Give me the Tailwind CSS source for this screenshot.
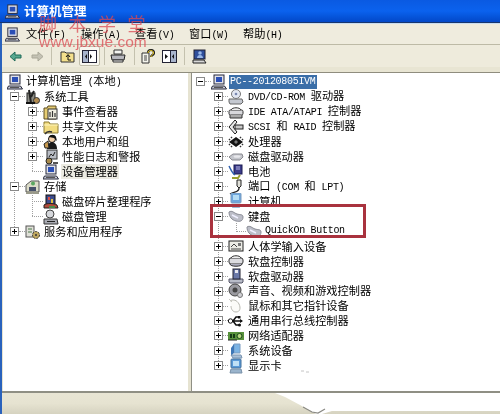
<!doctype html>
<html lang="zh">
<head>
<meta charset="utf-8">
<script src="https://cdn.jsdelivr.net/npm/@tailwindcss/browser@4"></script>
<title>计算机管理</title>
</head>
<body class="bg-white">
<svg class="hidden" width="0" height="0">
<defs>
<symbol id="pc" viewBox="0 0 16 16"><rect x="3" y="1" width="10" height="9" fill="#dfe1ea" stroke="#26283a"/><rect x="5" y="3" width="6" height="5" fill="#2b4fb5"/><path d="M1.500 12h12l2 3H0z" fill="#c9ccd8" stroke="#26283a"/><path d="M3 13.500h9" stroke="#555"/></symbol>
<symbol id="tools" viewBox="0 0 16 16"><rect x="2" y="4" width="8" height="10" fill="#8c8c84" stroke="#222"/><path d="M4 1l2 13M9 2l-3 6" stroke="#222" stroke-width="2"/><circle cx="11.500" cy="11.500" r="3" fill="#b08a50" stroke="#333"/><path d="M1 14h9" stroke="#111" stroke-width="2"/></symbol>
<symbol id="log" viewBox="0 0 16 16"><path d="M1 4h3l1-2h8v13H1z" fill="#e6cc72" stroke="#5a4a20"/><rect x="5" y="5" width="9" height="10" fill="#f2f0e2" stroke="#333"/><path d="M7 8v5M9.500 7v6M12 9v4" stroke="#333" stroke-width="1.200"/></symbol>
<symbol id="folder" viewBox="0 0 16 16"><path d="M1 3h5l1 2h8v9H1z" fill="#f2dc80" stroke="#8c7a30"/><path d="M1 6h14" stroke="#fff6c0"/><path d="M2 15c2-3 4-3 7-2" stroke="#333" stroke-width="1.500" fill="none"/></symbol>
<symbol id="users" viewBox="0 0 16 16"><circle cx="9" cy="5" r="3.500" fill="#f2cfa8" stroke="#111"/><path d="M6 3c1-3 6-3 7 0l1 4-3-3z" fill="#111"/><path d="M4 15c0-5 3-7 5-7s5 2 5 7z" fill="#1a1a1a"/><path d="M1 10l4-3 1 7H2z" fill="#c89a50" stroke="#222"/></symbol>
<symbol id="perf" viewBox="0 0 16 16"><rect x="4" y="1" width="10" height="9" fill="#b8bcc4" stroke="#333"/><path d="M6 8l2-3 2 2 2-4" stroke="#222" fill="none"/><circle cx="6" cy="12" r="3" fill="#a88a4c" stroke="#222"/><path d="M10 14h5" stroke="#555" stroke-width="2"/></symbol>
<symbol id="storage" viewBox="0 0 16 16"><path d="M1 6l5-4h8v11H1z" fill="#dcdcc8" stroke="#555"/><rect x="4" y="8" width="7" height="4" fill="#46506a"/><circle cx="8" cy="4.500" r="2" fill="#5aa860"/><path d="M1 13h13v2H1z" fill="#9a9a8a"/></symbol>
<symbol id="defrag" viewBox="0 0 16 16"><rect x="3" y="1" width="9" height="10" fill="#3d4a8c" stroke="#111"/><path d="M5 3h2v3H5z" fill="#d8504a"/><path d="M8 5h2v4H8z" fill="#e2c040"/><path d="M1 11c2-2 10-2 13 0l1 3H1z" fill="#b04a3a" stroke="#222"/><path d="M6 13h6" stroke="#4a8a4a" stroke-width="2"/></symbol>
<symbol id="diskm" viewBox="0 0 16 16"><circle cx="7" cy="5" r="4" fill="#d6d8dc" stroke="#444"/><path d="M1 10h13l1 5H1z" fill="#a8aab2" stroke="#333"/><path d="M4 12.500h8" stroke="#222"/></symbol>
<symbol id="svc" viewBox="0 0 16 16"><rect x="1" y="2" width="8" height="11" fill="#e0e0d8" stroke="#555"/><path d="M3 5h4M3 8h4" stroke="#4a7a4a"/><circle cx="11" cy="11" r="3.500" fill="#c0a860" stroke="#333" stroke-dasharray="2 1"/><circle cx="11" cy="11" r="1" fill="#333"/></symbol>
<symbol id="dvd" viewBox="0 0 16 16"><path d="M1 10h13l1 3-2 2H2l-1-2z" fill="#c4c8d0" stroke="#666"/><circle cx="8" cy="5" r="4.500" fill="#e2e6f2" stroke="#777"/><circle cx="8" cy="5" r="1.300" fill="#7a88b0"/></symbol>
<symbol id="ide" viewBox="0 0 16 16"><rect x="1" y="6" width="14" height="5" rx="1.500" fill="#d8d8dc" stroke="#333"/><path d="M3 6c1-3 9-3 10 0" fill="#eee" stroke="#333"/><path d="M2 11v3h12v-3" fill="#aaa" stroke="#333"/></symbol>
<symbol id="scsi" viewBox="0 0 16 16"><path d="M7 1L1 8l6 7 2-2-4-5 4-5z" fill="#e8e8e8" stroke="#222"/><rect x="7" y="6" width="8" height="4" fill="#c8c8c8" stroke="#222"/></symbol>
<symbol id="cpu" viewBox="0 0 16 16"><path d="M8 3l7 5-7 5-7-5z" fill="#141414"/><path d="M1 6l1-1M3 4l1-1M15 6l-1-1M13 4l-1-1M1 10l1 1M3 12l1 1M15 10l-1 1M13 12l-1 1" stroke="#333" stroke-width="1.500"/><path d="M8 6l2 2-2 2-2-2z" fill="#777"/></symbol>
<symbol id="hdd" viewBox="0 0 16 16"><path d="M1 8l4-3h9l1 3-3 3H4z" fill="#c4c6cc" stroke="#8a8a90"/><ellipse cx="9" cy="7.500" rx="3.500" ry="1.300" fill="#e8e8ec"/></symbol>
<symbol id="bat" viewBox="0 0 16 16"><rect x="6" y="1" width="8" height="9" fill="#3c3c8c" stroke="#1a1a50"/><path d="M8 3h4M8 5h4" stroke="#b8b8e0"/><path d="M1 2c2 4 3 7 6 9" stroke="#3060b0" stroke-width="1.500" fill="none"/><path d="M4 14h6l2-3" stroke="#9aa030" stroke-width="2" fill="none"/></symbol>
<symbol id="port" viewBox="0 0 16 16"><path d="M9 1h4v6l-2 2-2-2z" fill="#e0e0d8" stroke="#222"/><path d="M11 9c0 5-5 3-9 6" stroke="#222" stroke-width="1.300" fill="none"/></symbol>
<symbol id="comp" viewBox="0 0 16 16"><rect x="3" y="0" width="10" height="10" rx="1" fill="#6ea6dc" stroke="#7a9cc0"/><rect x="5" y="2" width="6" height="5" fill="#b4dcf4"/><path d="M5 11h6l1 4H4z" fill="#9cb8d4"/></symbol>
<symbol id="kb" viewBox="0 0 16 16"><path d="M1 4c3-2 5 1 8 2s6 0 6 3c0 4-3 5-7 4S1 9 1 4z" fill="#bcbec8" stroke="#8a8c96"/><path d="M4 7l6 3" stroke="#eef" stroke-width="1.500"/></symbol>
<symbol id="hid" viewBox="0 0 16 16"><rect x="1" y="3" width="14" height="10" fill="#ecece6" stroke="#222"/><path d="M3 9l3-3 3 3M3 11h10" stroke="#444" fill="none"/><rect x="10" y="5" width="3" height="3" fill="#777"/></symbol>
<symbol id="fdc" viewBox="0 0 16 16"><rect x="1" y="5" width="14" height="6" rx="2" fill="#dcdce0" stroke="#333"/><path d="M3 5c1-3 9-3 10 0" fill="#eee" stroke="#333"/><path d="M2 11c0 3 12 3 12 0" fill="#aab" stroke="#333"/></symbol>
<symbol id="fdd" viewBox="0 0 16 16"><path d="M1 11h14v3l-1 1H2l-1-1z" fill="#b8bcc8" stroke="#556"/><rect x="5" y="1" width="7" height="10" fill="#6a78a8" stroke="#223"/><rect x="7" y="2" width="3" height="3" fill="#e8e8f0"/></symbol>
<symbol id="snd" viewBox="0 0 16 16"><circle cx="7" cy="7" r="6" fill="#9a9aa0" stroke="#444"/><circle cx="7" cy="7" r="2.500" fill="#444"/><circle cx="12" cy="12" r="2.500" fill="#d0d0d4" stroke="#777"/></symbol>
<symbol id="mouse" viewBox="0 0 16 16"><path d="M2 3c3-2 7-1 9 3s1 8-3 8-5-4-5-6" fill="#fbfbf8" stroke="#b8b8b0"/><path d="M1 1l3 3" stroke="#c8c8c0"/></symbol>
<symbol id="usb" viewBox="0 0 16 16"><path d="M2 8h12M5 8l3-4h3M5 8l3 4h3" stroke="#111" stroke-width="1.500" fill="none"/><circle cx="2.500" cy="8" r="2.200" fill="#fff" stroke="#111"/><path d="M12 6l3 2-3 2z" fill="#111"/><rect x="10" y="3" width="2.500" height="2.500" fill="#111"/><circle cx="11.500" cy="12" r="1.500" fill="#111"/></symbol>
<symbol id="net" viewBox="0 0 16 16"><rect x="0" y="4" width="16" height="8" fill="#58923c"/><path d="M2 6h2v4H2zM5 6h2v4H5z" fill="#143a14"/><circle cx="11.500" cy="8" r="2.500" fill="#b8d880" stroke="#1a4a1a"/><path d="M0 12h9" stroke="#222"/></symbol>
<symbol id="sys" viewBox="0 0 16 16"><path d="M6 1h6v9H6z" fill="#7cb4e4" stroke="#7a9cc0"/><path d="M3 5l3-4v9l-3 3z" fill="#3e78b8"/><path d="M3 12h10l1 3H5z" fill="#a8c0d8" stroke="#7a94b0"/></symbol>
<symbol id="disp" viewBox="0 0 16 16"><rect x="3" y="1" width="10" height="9" rx="1" fill="#5a9ad8" stroke="#43709c"/><path d="M5 3h6v5H5z" fill="#bfe0f6"/><path d="M3 11h10l1 4H2z" fill="#9ab4cc" stroke="#7890a8"/></symbol>
<symbol id="plus" viewBox="0 0 9 9"><rect x=".5" y=".5" width="8" height="8" fill="#fff" stroke="#8a8a8a"/><path d="M2 4.500h5M4.500 2v5" stroke="#000"/></symbol>
<symbol id="minus" viewBox="0 0 9 9"><rect x=".5" y=".5" width="8" height="8" fill="#fff" stroke="#8a8a8a"/><path d="M2 4.500h5" stroke="#000"/></symbol>
</defs>
</svg>

<div class="relative w-[500px] h-[414px] overflow-hidden flex flex-col blur-[0.35px] bg-[#e6e3d1] font-['Noto_Sans_CJK_SC',sans-serif] text-black [&_span]:font-['Liberation_Mono',monospace] [&_span]:text-[10px] [&_span]:tracking-[-0.3px]">

  <!-- title bar -->
  <header class="h-[23px] shrink-0 flex items-center gap-[4px] pl-[5px] bg-gradient-to-b from-[#0a5ae2] via-[#0b62ee] to-[#0348c8] border-b border-[#18366e]">
    <svg class="w-[15px] h-[15px]"><use href="#pc"/></svg>
    <h1 class="text-[12.500px] font-bold text-white leading-none">计算机管理</h1>
  </header>

  <div class="flex-1 min-h-0 flex flex-col border-l-[2px] border-[#2a62bc]">
    <!-- menu -->
    <nav class="h-[21px] shrink-0 flex items-center pl-[3px] bg-[#efecde] border-t border-[#c8dcf0] border-b-[#a8a694] text-[11.200px] [&_span]:text-[9.500px]">
      <svg class="w-[15px] h-[15px] mr-[6px]"><use href="#pc"/></svg>
      <a class="w-[55px] whitespace-nowrap">文件<span>(F)</span></a>
      <a class="w-[54px] whitespace-nowrap">操作<span>(A)</span></a>
      <a class="w-[54px] whitespace-nowrap">查看<span>(V)</span></a>
      <a class="w-[54px] whitespace-nowrap">窗口<span>(W)</span></a>
      <a class="whitespace-nowrap">帮助<span>(H)</span></a>
    </nav>
    <div class="h-px shrink-0 bg-[#bdbaa6]"></div>

    <!-- toolbar -->
    <div class="h-[22px] shrink-0 flex items-center bg-[#eeebdc] pl-[6px]">
      <svg class="w-[13px] h-[13px] ml-[1px]" viewBox="0 0 13 13"><path d="M1 6.500L6 2v3h6v3H6v3z" fill="#58a890" stroke="#1f6a58"/></svg>
      <svg class="w-[13px] h-[13px] ml-[9px]" viewBox="0 0 13 13"><path d="M12 6.500L7 2v3H1v3h6v3z" fill="#c4c2b4" stroke="#aaa898"/></svg>
      <i class="w-px h-[18px] bg-[#c4c1ae] ml-[7px]"></i>
      <svg class="w-[15px] h-[14px] ml-[8px]" viewBox="0 0 15 14"><path d="M1 3h4l1 1h8v9H1z" fill="#f4e08c" stroke="#333"/><path d="M8 11V6M6 8l2-2.500L10 8M8 11h3" stroke="#111" fill="none"/></svg>
      <div class="w-[21px] h-[20px] ml-[4px] flex items-center justify-center bg-[#f8f7f0] border border-[#c0bdaa] rounded-[2px]">
        <svg class="w-[15px] h-[13px]" viewBox="0 0 15 13"><rect x=".5" y=".5" width="14" height="12" fill="#fff" stroke="#223"/><rect x="1" y="1" width="5" height="11" fill="#a8b4cc"/><path d="M6.500 1v11" stroke="#223"/><path d="M5 4v5L3 6.500zM8 4v5l2-2.500z" fill="#111"/></svg>
      </div>
      <i class="w-px h-[18px] bg-[#c4c1ae] ml-[4px]"></i>
      <svg class="w-[16px] h-[14px] ml-[5px]" viewBox="0 0 16 14"><path d="M4 1h8v4H4z" fill="#f4f4f0" stroke="#333"/><path d="M1 6h14l-1 5H2z" fill="#b8b8be" stroke="#222"/><path d="M3 11h10v2H3z" fill="#eee" stroke="#333"/></svg>
      <i class="w-px h-[18px] bg-[#c4c1ae] ml-[8px]"></i>
      <svg class="w-[14px] h-[15px] ml-[6px]" viewBox="0 0 14 15"><path d="M1 4h7v10H1z" fill="#f4f4ec" stroke="#333"/><path d="M3 7h3M3 9h3M3 11h3" stroke="#444"/><path d="M7 4c0-4 6-4 6 0 0 2-3 2-3 4" stroke="#222" stroke-width="2.200" fill="none"/><path d="M7 4c0-3.500 5.500-3.500 5.500 0 0 2-2.500 2-2.500 4" stroke="#f0d020" fill="none"/></svg>
      <svg class="w-[15px] h-[13px] ml-[7px]" viewBox="0 0 15 13"><rect x=".5" y=".5" width="14" height="12" fill="#fff" stroke="#223"/><rect x="9" y="1" width="5" height="11" fill="#a8b4cc"/><path d="M8.500 1v11" stroke="#223"/><path d="M3 4v5l3-2.500zM12 4v5l-2-2.500z" fill="#111"/></svg>
      <i class="w-px h-[18px] bg-[#c4c1ae] ml-[7px]"></i>
      <svg class="w-[15px] h-[15px] ml-[7px]" viewBox="0 0 15 15"><rect x="2" y="1" width="11" height="9" fill="#2f4f9c" stroke="#223"/><circle cx="8" cy="4" r="1.800" fill="#9ab8e8"/><path d="M5 9c0-4 6-4 6 0" fill="#9ab8e8"/><path d="M1 11h11l2 3H1z" fill="#d8d8d8" stroke="#222"/></svg>
    </div>
    <div class="h-[6px] shrink-0 bg-[#e8e5d3] border-b border-[#8f8d7e]"></div>

    <!-- panes -->
    <main class="h-[320px] shrink-0 flex text-[11.200px] leading-none border-b-2 border-[#8f8f84]">
      <aside class="relative w-[185px] ml-px bg-white shrink-0 pt-px">
        <i class="absolute left-[11px] top-[16px] h-[142px] border-l border-dotted border-[#a0a0a0]"></i>
        <i class="absolute left-[29px] top-[31px] h-[67px] border-l border-dotted border-[#a0a0a0]"></i>
        <i class="absolute left-[29px] top-[120px] h-[23px] border-l border-dotted border-[#a0a0a0]"></i>

        <div class="h-[15px] flex items-center pl-[4px]"><svg class="w-[16px] h-[16px] mr-[3px]"><use href="#pc"/></svg><p>计算机管理<span> (</span>本地<span>)</span></p></div>

        <div class="h-[15px] flex items-center pl-[7px]"><svg class="w-[9px] h-[9px] relative"><use href="#minus"/></svg><i class="w-[6px] border-t border-dotted border-[#a0a0a0]"></i><svg class="w-[16px] h-[16px] mr-[3px]"><use href="#tools"/></svg>系统工具</div>
        <div class="h-[15px] flex items-center pl-[25px]"><svg class="w-[9px] h-[9px] relative"><use href="#plus"/></svg><i class="w-[6px] border-t border-dotted border-[#a0a0a0]"></i><svg class="w-[16px] h-[16px] mr-[3px]"><use href="#log"/></svg>事件查看器</div>
        <div class="h-[15px] flex items-center pl-[25px]"><svg class="w-[9px] h-[9px] relative"><use href="#plus"/></svg><i class="w-[6px] border-t border-dotted border-[#a0a0a0]"></i><svg class="w-[16px] h-[16px] mr-[3px]"><use href="#folder"/></svg>共享文件夹</div>
        <div class="h-[15px] flex items-center pl-[25px]"><svg class="w-[9px] h-[9px] relative"><use href="#plus"/></svg><i class="w-[6px] border-t border-dotted border-[#a0a0a0]"></i><svg class="w-[16px] h-[16px] mr-[3px]"><use href="#users"/></svg>本地用户和组</div>
        <div class="h-[15px] flex items-center pl-[25px]"><svg class="w-[9px] h-[9px] relative"><use href="#plus"/></svg><i class="w-[6px] border-t border-dotted border-[#a0a0a0]"></i><svg class="w-[16px] h-[16px] mr-[3px]"><use href="#perf"/></svg>性能日志和警报</div>
        <div class="h-[15px] flex items-center pl-[29px]"><i class="w-[11px] border-t border-dotted border-[#a0a0a0]"></i><svg class="w-[16px] h-[16px] mr-[2px]"><use href="#pc"/></svg><b class="font-normal bg-[#ecebe2] h-[15px] px-px flex items-center">设备管理器</b></div>

        <div class="h-[15px] flex items-center pl-[7px]"><svg class="w-[9px] h-[9px] relative"><use href="#minus"/></svg><i class="w-[6px] border-t border-dotted border-[#a0a0a0]"></i><svg class="w-[16px] h-[16px] mr-[3px]"><use href="#storage"/></svg>存储</div>
        <div class="h-[15px] flex items-center pl-[29px]"><i class="w-[11px] border-t border-dotted border-[#a0a0a0]"></i><svg class="w-[16px] h-[16px] mr-[3px]"><use href="#defrag"/></svg>磁盘碎片整理程序</div>
        <div class="h-[15px] flex items-center pl-[29px]"><i class="w-[11px] border-t border-dotted border-[#a0a0a0]"></i><svg class="w-[16px] h-[16px] mr-[3px]"><use href="#diskm"/></svg>磁盘管理</div>
        <div class="h-[15px] flex items-center pl-[7px]"><svg class="w-[9px] h-[9px] relative"><use href="#plus"/></svg><i class="w-[6px] border-t border-dotted border-[#a0a0a0]"></i><svg class="w-[16px] h-[16px] mr-[3px]"><use href="#svc"/></svg>服务和应用程序</div>
      </aside>

      <div class="w-[4px] shrink-0 bg-[#e6e3d1] border-r border-[#8f8f84]"></div>

      <section class="relative flex-1 bg-white pt-[1.500px] [&>div]:h-[14.950px] [&>div]:flex [&>div]:items-center [&>div]:whitespace-nowrap">
        <i class="absolute left-[26px] top-[24px] h-[270px] border-l border-dotted border-[#a0a0a0]"></i>
        <i class="absolute left-[44px] top-[150px] h-[9px] border-l border-dotted border-[#a0a0a0]"></i>

        <div class="pl-[4px]"><svg class="w-[9px] h-[9px] relative"><use href="#minus"/></svg><i class="w-[6px] border-t border-dotted border-[#a0a0a0]"></i><svg class="w-[16px] h-[16px] mr-[2px]"><use href="#pc"/></svg><b class="bg-[#3a6ea8] text-white h-[14px] pl-px pr-px flex items-center font-normal"><span>PC--20120805IVM</span></b></div>

        <div class="pl-[22px]"><svg class="w-[9px] h-[9px] relative"><use href="#plus"/></svg><i class="w-[5px] border-t border-dotted border-[#a0a0a0]"></i><svg class="w-[16px] h-[16px] mr-[4px]"><use href="#dvd"/></svg><p><span>DVD/CD-ROM </span>驱动器</p></div>
        <div class="pl-[22px]"><svg class="w-[9px] h-[9px] relative"><use href="#plus"/></svg><i class="w-[5px] border-t border-dotted border-[#a0a0a0]"></i><svg class="w-[16px] h-[16px] mr-[4px]"><use href="#ide"/></svg><p><span>IDE ATA/ATAPI </span>控制器</p></div>
        <div class="pl-[22px]"><svg class="w-[9px] h-[9px] relative"><use href="#plus"/></svg><i class="w-[5px] border-t border-dotted border-[#a0a0a0]"></i><svg class="w-[16px] h-[16px] mr-[4px]"><use href="#scsi"/></svg><p><span>SCSI </span>和<span> RAID </span>控制器</p></div>
        <div class="pl-[22px]"><svg class="w-[9px] h-[9px] relative"><use href="#plus"/></svg><i class="w-[5px] border-t border-dotted border-[#a0a0a0]"></i><svg class="w-[16px] h-[16px] mr-[4px]"><use href="#cpu"/></svg>处理器</div>
        <div class="pl-[22px]"><svg class="w-[9px] h-[9px] relative"><use href="#plus"/></svg><i class="w-[5px] border-t border-dotted border-[#a0a0a0]"></i><svg class="w-[16px] h-[16px] mr-[4px]"><use href="#hdd"/></svg>磁盘驱动器</div>
        <div class="pl-[22px]"><svg class="w-[9px] h-[9px] relative"><use href="#plus"/></svg><i class="w-[5px] border-t border-dotted border-[#a0a0a0]"></i><svg class="w-[16px] h-[16px] mr-[4px]"><use href="#bat"/></svg>电池</div>
        <div class="pl-[22px]"><svg class="w-[9px] h-[9px] relative"><use href="#plus"/></svg><i class="w-[5px] border-t border-dotted border-[#a0a0a0]"></i><svg class="w-[16px] h-[16px] mr-[4px]"><use href="#port"/></svg><p>端口<span> (COM </span>和<span> LPT)</span></p></div>
        <div class="pl-[22px]"><svg class="w-[9px] h-[9px] relative"><use href="#plus"/></svg><i class="w-[5px] border-t border-dotted border-[#a0a0a0]"></i><svg class="w-[16px] h-[16px] mr-[4px]"><use href="#comp"/></svg>计算机</div>
        <div class="pl-[22px]"><svg class="w-[9px] h-[9px] relative"><use href="#minus"/></svg><i class="w-[5px] border-t border-dotted border-[#a0a0a0]"></i><svg class="w-[16px] h-[16px] mr-[4px]"><use href="#kb"/></svg>键盘</div>
        <div class="pl-[44px]"><i class="w-[10px] border-t border-dotted border-[#a0a0a0]"></i><svg class="w-[16px] h-[16px] mr-[3px]"><use href="#kb"/></svg><span>QuickOn Button</span></div>
        <div class="pl-[22px]"><svg class="w-[9px] h-[9px] relative"><use href="#plus"/></svg><i class="w-[5px] border-t border-dotted border-[#a0a0a0]"></i><svg class="w-[16px] h-[16px] mr-[4px]"><use href="#hid"/></svg>人体学输入设备</div>
        <div class="pl-[22px]"><svg class="w-[9px] h-[9px] relative"><use href="#plus"/></svg><i class="w-[5px] border-t border-dotted border-[#a0a0a0]"></i><svg class="w-[16px] h-[16px] mr-[4px]"><use href="#fdc"/></svg>软盘控制器</div>
        <div class="pl-[22px]"><svg class="w-[9px] h-[9px] relative"><use href="#plus"/></svg><i class="w-[5px] border-t border-dotted border-[#a0a0a0]"></i><svg class="w-[16px] h-[16px] mr-[4px]"><use href="#fdd"/></svg>软盘驱动器</div>
        <div class="pl-[22px]"><svg class="w-[9px] h-[9px] relative"><use href="#plus"/></svg><i class="w-[5px] border-t border-dotted border-[#a0a0a0]"></i><svg class="w-[16px] h-[16px] mr-[4px]"><use href="#snd"/></svg>声音、视频和游戏控制器</div>
        <div class="pl-[22px]"><svg class="w-[9px] h-[9px] relative"><use href="#plus"/></svg><i class="w-[5px] border-t border-dotted border-[#a0a0a0]"></i><svg class="w-[16px] h-[16px] mr-[4px]"><use href="#mouse"/></svg>鼠标和其它指针设备</div>
        <div class="pl-[22px]"><svg class="w-[9px] h-[9px] relative"><use href="#plus"/></svg><i class="w-[5px] border-t border-dotted border-[#a0a0a0]"></i><svg class="w-[16px] h-[16px] mr-[4px]"><use href="#usb"/></svg>通用串行总线控制器</div>
        <div class="pl-[22px]"><svg class="w-[9px] h-[9px] relative"><use href="#plus"/></svg><i class="w-[5px] border-t border-dotted border-[#a0a0a0]"></i><svg class="w-[16px] h-[16px] mr-[4px]"><use href="#net"/></svg>网络适配器</div>
        <div class="pl-[22px]"><svg class="w-[9px] h-[9px] relative"><use href="#plus"/></svg><i class="w-[5px] border-t border-dotted border-[#a0a0a0]"></i><svg class="w-[16px] h-[16px] mr-[4px]"><use href="#sys"/></svg>系统设备</div>
        <div class="pl-[22px]"><svg class="w-[9px] h-[9px] relative"><use href="#plus"/></svg><i class="w-[5px] border-t border-dotted border-[#a0a0a0]"></i><svg class="w-[16px] h-[16px] mr-[4px]"><use href="#disp"/></svg>显示卡</div>
      </section>
    </main>

    <!-- status bar -->
    <footer class="flex-1 bg-gradient-to-b from-[#e8e5d4] via-[#e6e3d1] to-[#d6d3c0]"></footer>
  </div>

  <!-- red annotation around the keyboard node -->
  <div class="absolute left-[210px] top-[204px] w-[156px] h-[34px] border-[3px] border-[#a9323e]"></div>

  <!-- torn white corner of the status bar -->
  <svg class="absolute left-0 top-0 w-[500px] h-[414px] pointer-events-none" viewBox="0 0 500 414">
    <polygon points="275,393 500,393 500,411 332,411 322,414 316,414 300,405 285,397" fill="#fff"/>
    <polyline points="303,407 312,412 318,413 325,409" fill="none" stroke="#8a8a84" stroke-width="1.200"/>
    <path d="M301 371h3M306 372h3" stroke="#c4c4c4"/>
  </svg>

  <!-- site watermark -->
  <div class="absolute left-[39px] top-[12px] w-[115px] flex flex-col items-start text-[#dc4a52]/75 pointer-events-none">
    <p class="text-[18px] leading-[22px] tracking-[11.500px] whitespace-nowrap font-['Noto_Sans_CJK_SC',sans-serif]">脚本学堂</p>
    <p class="font-['Liberation_Sans',sans-serif] text-[15.500px] leading-[15px] whitespace-nowrap">www.jbxue.com</p>
  </div>
</div>
</body>
</html>
